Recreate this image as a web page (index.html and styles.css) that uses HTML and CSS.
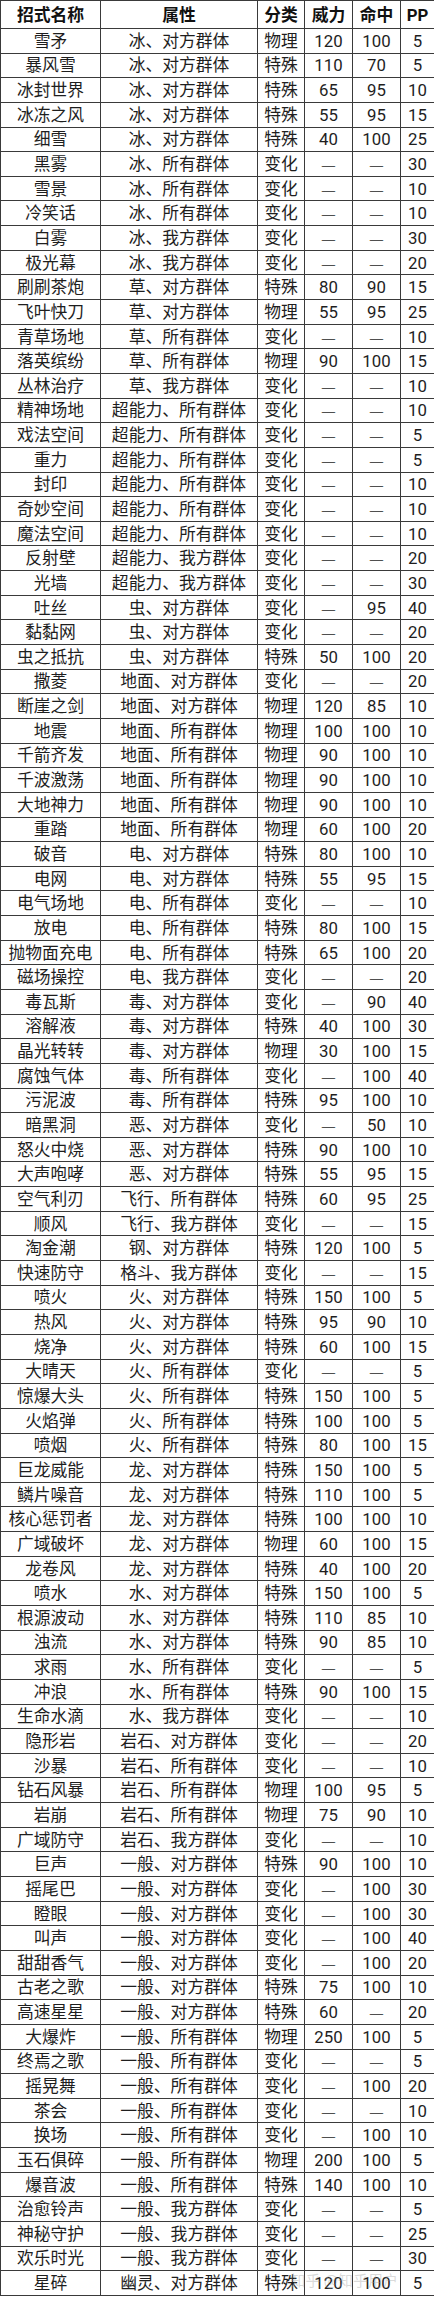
FILE: index.html
```html
<!DOCTYPE html>
<html lang="zh-CN">
<head>
<meta charset="utf-8">
<title>招式表</title>
<link rel="stylesheet" href="styles.css">
</head>
<body>
<div class="wrap">
<table class="moves">
<colgroup>
<col class="c-name"><col class="c-type"><col class="c-cat"><col class="c-pow"><col class="c-acc"><col class="c-pp">
</colgroup>
<thead>
<tr><th>招式名称</th><th>属性</th><th>分类</th><th>威力</th><th>命中</th><th>PP</th></tr>
</thead>
<tbody>
<tr><td>雪矛</td><td>冰、对方群体</td><td>物理</td><td>120</td><td>100</td><td>5</td></tr>
<tr><td>暴风雪</td><td>冰、对方群体</td><td>特殊</td><td>110</td><td>70</td><td>5</td></tr>
<tr><td>冰封世界</td><td>冰、对方群体</td><td>特殊</td><td>65</td><td>95</td><td>10</td></tr>
<tr><td>冰冻之风</td><td>冰、对方群体</td><td>特殊</td><td>55</td><td>95</td><td>15</td></tr>
<tr><td>细雪</td><td>冰、对方群体</td><td>特殊</td><td>40</td><td>100</td><td>25</td></tr>
<tr><td>黑雾</td><td>冰、所有群体</td><td>变化</td><td class="dash">—</td><td class="dash">—</td><td>30</td></tr>
<tr><td>雪景</td><td>冰、所有群体</td><td>变化</td><td class="dash">—</td><td class="dash">—</td><td>10</td></tr>
<tr><td>冷笑话</td><td>冰、所有群体</td><td>变化</td><td class="dash">—</td><td class="dash">—</td><td>10</td></tr>
<tr><td>白雾</td><td>冰、我方群体</td><td>变化</td><td class="dash">—</td><td class="dash">—</td><td>30</td></tr>
<tr><td>极光幕</td><td>冰、我方群体</td><td>变化</td><td class="dash">—</td><td class="dash">—</td><td>20</td></tr>
<tr><td>刷刷茶炮</td><td>草、对方群体</td><td>特殊</td><td>80</td><td>90</td><td>15</td></tr>
<tr><td>飞叶快刀</td><td>草、对方群体</td><td>物理</td><td>55</td><td>95</td><td>25</td></tr>
<tr><td>青草场地</td><td>草、所有群体</td><td>变化</td><td class="dash">—</td><td class="dash">—</td><td>10</td></tr>
<tr><td>落英缤纷</td><td>草、所有群体</td><td>物理</td><td>90</td><td>100</td><td>15</td></tr>
<tr><td>丛林治疗</td><td>草、我方群体</td><td>变化</td><td class="dash">—</td><td class="dash">—</td><td>10</td></tr>
<tr><td>精神场地</td><td>超能力、所有群体</td><td>变化</td><td class="dash">—</td><td class="dash">—</td><td>10</td></tr>
<tr><td>戏法空间</td><td>超能力、所有群体</td><td>变化</td><td class="dash">—</td><td class="dash">—</td><td>5</td></tr>
<tr><td>重力</td><td>超能力、所有群体</td><td>变化</td><td class="dash">—</td><td class="dash">—</td><td>5</td></tr>
<tr><td>封印</td><td>超能力、所有群体</td><td>变化</td><td class="dash">—</td><td class="dash">—</td><td>10</td></tr>
<tr><td>奇妙空间</td><td>超能力、所有群体</td><td>变化</td><td class="dash">—</td><td class="dash">—</td><td>10</td></tr>
<tr><td>魔法空间</td><td>超能力、所有群体</td><td>变化</td><td class="dash">—</td><td class="dash">—</td><td>10</td></tr>
<tr><td>反射壁</td><td>超能力、我方群体</td><td>变化</td><td class="dash">—</td><td class="dash">—</td><td>20</td></tr>
<tr><td>光墙</td><td>超能力、我方群体</td><td>变化</td><td class="dash">—</td><td class="dash">—</td><td>30</td></tr>
<tr><td>吐丝</td><td>虫、对方群体</td><td>变化</td><td class="dash">—</td><td>95</td><td>40</td></tr>
<tr><td>黏黏网</td><td>虫、对方群体</td><td>变化</td><td class="dash">—</td><td class="dash">—</td><td>20</td></tr>
<tr><td>虫之抵抗</td><td>虫、对方群体</td><td>特殊</td><td>50</td><td>100</td><td>20</td></tr>
<tr><td>撒菱</td><td>地面、对方群体</td><td>变化</td><td class="dash">—</td><td class="dash">—</td><td>20</td></tr>
<tr><td>断崖之剑</td><td>地面、对方群体</td><td>物理</td><td>120</td><td>85</td><td>10</td></tr>
<tr><td>地震</td><td>地面、所有群体</td><td>物理</td><td>100</td><td>100</td><td>10</td></tr>
<tr><td>千箭齐发</td><td>地面、所有群体</td><td>物理</td><td>90</td><td>100</td><td>10</td></tr>
<tr><td>千波激荡</td><td>地面、所有群体</td><td>物理</td><td>90</td><td>100</td><td>10</td></tr>
<tr><td>大地神力</td><td>地面、所有群体</td><td>物理</td><td>90</td><td>100</td><td>10</td></tr>
<tr><td>重踏</td><td>地面、所有群体</td><td>物理</td><td>60</td><td>100</td><td>20</td></tr>
<tr><td>破音</td><td>电、对方群体</td><td>特殊</td><td>80</td><td>100</td><td>10</td></tr>
<tr><td>电网</td><td>电、对方群体</td><td>特殊</td><td>55</td><td>95</td><td>15</td></tr>
<tr><td>电气场地</td><td>电、所有群体</td><td>变化</td><td class="dash">—</td><td class="dash">—</td><td>10</td></tr>
<tr><td>放电</td><td>电、所有群体</td><td>特殊</td><td>80</td><td>100</td><td>15</td></tr>
<tr><td>抛物面充电</td><td>电、所有群体</td><td>特殊</td><td>65</td><td>100</td><td>20</td></tr>
<tr><td>磁场操控</td><td>电、我方群体</td><td>变化</td><td class="dash">—</td><td class="dash">—</td><td>20</td></tr>
<tr><td>毒瓦斯</td><td>毒、对方群体</td><td>变化</td><td class="dash">—</td><td>90</td><td>40</td></tr>
<tr><td>溶解液</td><td>毒、对方群体</td><td>特殊</td><td>40</td><td>100</td><td>30</td></tr>
<tr><td>晶光转转</td><td>毒、对方群体</td><td>物理</td><td>30</td><td>100</td><td>15</td></tr>
<tr><td>腐蚀气体</td><td>毒、所有群体</td><td>变化</td><td class="dash">—</td><td>100</td><td>40</td></tr>
<tr><td>污泥波</td><td>毒、所有群体</td><td>特殊</td><td>95</td><td>100</td><td>10</td></tr>
<tr><td>暗黑洞</td><td>恶、对方群体</td><td>变化</td><td class="dash">—</td><td>50</td><td>10</td></tr>
<tr><td>怒火中烧</td><td>恶、对方群体</td><td>特殊</td><td>90</td><td>100</td><td>10</td></tr>
<tr><td>大声咆哮</td><td>恶、对方群体</td><td>特殊</td><td>55</td><td>95</td><td>15</td></tr>
<tr><td>空气利刃</td><td>飞行、所有群体</td><td>特殊</td><td>60</td><td>95</td><td>25</td></tr>
<tr><td>顺风</td><td>飞行、我方群体</td><td>变化</td><td class="dash">—</td><td class="dash">—</td><td>15</td></tr>
<tr><td>淘金潮</td><td>钢、对方群体</td><td>特殊</td><td>120</td><td>100</td><td>5</td></tr>
<tr><td>快速防守</td><td>格斗、我方群体</td><td>变化</td><td class="dash">—</td><td class="dash">—</td><td>15</td></tr>
<tr><td>喷火</td><td>火、对方群体</td><td>特殊</td><td>150</td><td>100</td><td>5</td></tr>
<tr><td>热风</td><td>火、对方群体</td><td>特殊</td><td>95</td><td>90</td><td>10</td></tr>
<tr><td>烧净</td><td>火、对方群体</td><td>特殊</td><td>60</td><td>100</td><td>15</td></tr>
<tr><td>大晴天</td><td>火、所有群体</td><td>变化</td><td class="dash">—</td><td class="dash">—</td><td>5</td></tr>
<tr><td>惊爆大头</td><td>火、所有群体</td><td>特殊</td><td>150</td><td>100</td><td>5</td></tr>
<tr><td>火焰弹</td><td>火、所有群体</td><td>特殊</td><td>100</td><td>100</td><td>5</td></tr>
<tr><td>喷烟</td><td>火、所有群体</td><td>特殊</td><td>80</td><td>100</td><td>15</td></tr>
<tr><td>巨龙威能</td><td>龙、对方群体</td><td>特殊</td><td>150</td><td>100</td><td>5</td></tr>
<tr><td>鳞片噪音</td><td>龙、对方群体</td><td>特殊</td><td>110</td><td>100</td><td>5</td></tr>
<tr><td>核心惩罚者</td><td>龙、对方群体</td><td>特殊</td><td>100</td><td>100</td><td>10</td></tr>
<tr><td>广域破坏</td><td>龙、对方群体</td><td>物理</td><td>60</td><td>100</td><td>15</td></tr>
<tr><td>龙卷风</td><td>龙、对方群体</td><td>特殊</td><td>40</td><td>100</td><td>20</td></tr>
<tr><td>喷水</td><td>水、对方群体</td><td>特殊</td><td>150</td><td>100</td><td>5</td></tr>
<tr><td>根源波动</td><td>水、对方群体</td><td>特殊</td><td>110</td><td>85</td><td>10</td></tr>
<tr><td>浊流</td><td>水、对方群体</td><td>特殊</td><td>90</td><td>85</td><td>10</td></tr>
<tr><td>求雨</td><td>水、所有群体</td><td>变化</td><td class="dash">—</td><td class="dash">—</td><td>5</td></tr>
<tr><td>冲浪</td><td>水、所有群体</td><td>特殊</td><td>90</td><td>100</td><td>15</td></tr>
<tr><td>生命水滴</td><td>水、我方群体</td><td>变化</td><td class="dash">—</td><td class="dash">—</td><td>10</td></tr>
<tr><td>隐形岩</td><td>岩石、对方群体</td><td>变化</td><td class="dash">—</td><td class="dash">—</td><td>20</td></tr>
<tr><td>沙暴</td><td>岩石、所有群体</td><td>变化</td><td class="dash">—</td><td class="dash">—</td><td>10</td></tr>
<tr><td>钻石风暴</td><td>岩石、所有群体</td><td>物理</td><td>100</td><td>95</td><td>5</td></tr>
<tr><td>岩崩</td><td>岩石、所有群体</td><td>物理</td><td>75</td><td>90</td><td>10</td></tr>
<tr><td>广域防守</td><td>岩石、我方群体</td><td>变化</td><td class="dash">—</td><td class="dash">—</td><td>10</td></tr>
<tr><td>巨声</td><td>一般、对方群体</td><td>特殊</td><td>90</td><td>100</td><td>10</td></tr>
<tr><td>摇尾巴</td><td>一般、对方群体</td><td>变化</td><td class="dash">—</td><td>100</td><td>30</td></tr>
<tr><td>瞪眼</td><td>一般、对方群体</td><td>变化</td><td class="dash">—</td><td>100</td><td>30</td></tr>
<tr><td>叫声</td><td>一般、对方群体</td><td>变化</td><td class="dash">—</td><td>100</td><td>40</td></tr>
<tr><td>甜甜香气</td><td>一般、对方群体</td><td>变化</td><td class="dash">—</td><td>100</td><td>20</td></tr>
<tr><td>古老之歌</td><td>一般、对方群体</td><td>特殊</td><td>75</td><td>100</td><td>10</td></tr>
<tr><td>高速星星</td><td>一般、对方群体</td><td>特殊</td><td>60</td><td class="dash">—</td><td>20</td></tr>
<tr><td>大爆炸</td><td>一般、所有群体</td><td>物理</td><td>250</td><td>100</td><td>5</td></tr>
<tr><td>终焉之歌</td><td>一般、所有群体</td><td>变化</td><td class="dash">—</td><td class="dash">—</td><td>5</td></tr>
<tr><td>摇晃舞</td><td>一般、所有群体</td><td>变化</td><td class="dash">—</td><td>100</td><td>20</td></tr>
<tr><td>茶会</td><td>一般、所有群体</td><td>变化</td><td class="dash">—</td><td class="dash">—</td><td>10</td></tr>
<tr><td>换场</td><td>一般、所有群体</td><td>变化</td><td class="dash">—</td><td>100</td><td>10</td></tr>
<tr><td>玉石俱碎</td><td>一般、所有群体</td><td>物理</td><td>200</td><td>100</td><td>5</td></tr>
<tr><td>爆音波</td><td>一般、所有群体</td><td>特殊</td><td>140</td><td>100</td><td>10</td></tr>
<tr><td>治愈铃声</td><td>一般、我方群体</td><td>变化</td><td class="dash">—</td><td class="dash">—</td><td>5</td></tr>
<tr><td>神秘守护</td><td>一般、我方群体</td><td>变化</td><td class="dash">—</td><td class="dash">—</td><td>25</td></tr>
<tr><td>欢乐时光</td><td>一般、我方群体</td><td>变化</td><td class="dash">—</td><td class="dash">—</td><td>30</td></tr>
<tr><td>星碎</td><td>幽灵、对方群体</td><td>特殊</td><td>120</td><td>100</td><td>5</td></tr>
</tbody>
</table>
<div class="watermark">知乎 @知乎用户</div>
</div>
</body>
</html>
```

FILE: styles.css
```css
html, body {
  margin: 0;
  padding: 0;
  background: #ffffff;
}

.wrap {
  position: relative;
  width: 434px;
}

.moves {
  width: 434px;
  table-layout: fixed;
  border-collapse: collapse;
  font-family: Roboto, "Noto Sans CJK SC", sans-serif;
  font-size: 16.8px;
  color: #1e1e1e;
}

.c-name { width: 100px; }
.c-type { width: 157px; }
.c-cat { width: 47px; }
.c-pow { width: 48px; }
.c-acc { width: 48px; }
.c-pp { width: 34px; }

.moves th,
.moves td {
  border: 1px solid #3a3a3a;
  padding: 0;
  text-align: center;
  vertical-align: middle;
  line-height: 20px;
  white-space: nowrap;
  overflow: hidden;
}

.moves th {
  height: 27px;
  font-weight: 700;
  color: #111;
}

.moves td {
  height: 23.65px;
}

.moves td.dash {
  font-family: "Noto Sans CJK SC", sans-serif;
  font-weight: 300;
}

.watermark {
  position: absolute;
  right: 36px;
  bottom: 6px;
  font-family: "Noto Sans CJK SC", sans-serif;
  font-size: 15px;
  color: rgba(150, 150, 150, 0.35);
  pointer-events: none;
}
```
